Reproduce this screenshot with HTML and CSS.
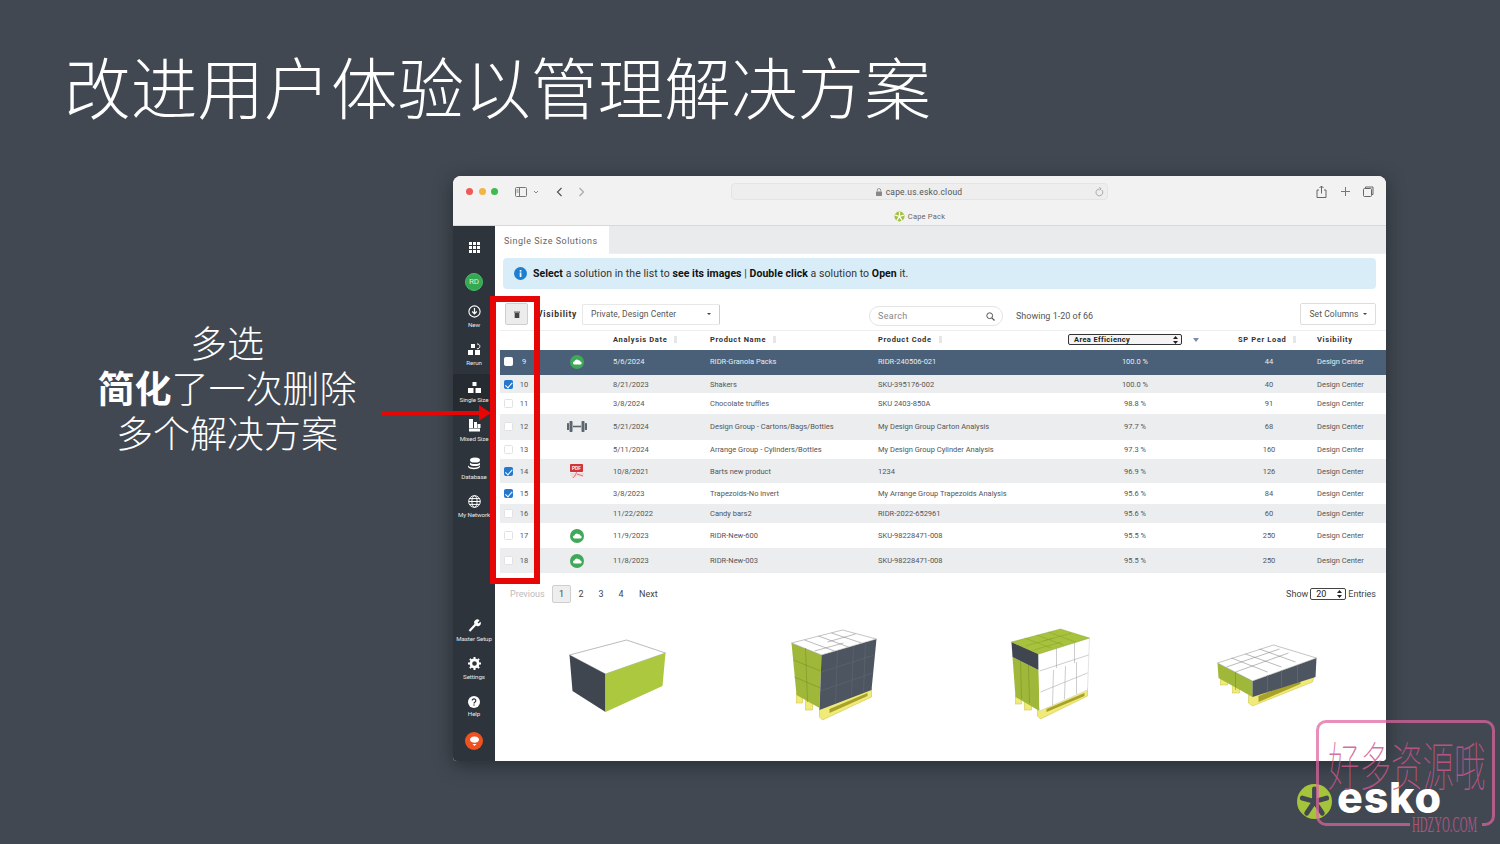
FILE: index.html
```html
<!DOCTYPE html>
<html lang="zh">
<head>
<meta charset="utf-8">
<title>改进用户体验以管理解决方案</title>
<link rel="stylesheet" href="styles.css">
</head>
<body>
<div class="slide">
  <h1 class="title">改进用户体验以管理解决方案</h1>
  <div class="stage">
    <div class="callout">
      <p>多选</p>
      <p><b>简化</b>了一次删除</p>
      <p>多个解决方案</p>
    </div>
    <div class="window">
      <div class="chrome">
        <div class="chrome-top">
          <span class="light red"></span><span class="light amber"></span><span class="light green"></span>
          <svg class="c-sidebar" width="12" height="10" viewBox="0 0 12 10"><rect x=".5" y=".5" width="11" height="9" rx="1" fill="none" stroke="#777"/><path d="M4.5 1v8M1.5 3h2M1.5 5h2" stroke="#777" fill="none"/></svg>
          <svg class="c-chev" width="6" height="4" viewBox="0 0 6 4"><path d="M1 1l2 2 2-2" fill="none" stroke="#888"/></svg>
          <svg class="c-back" width="7" height="10" viewBox="0 0 7 10"><path d="M5.5 1L1.5 5l4 4" fill="none" stroke="#555" stroke-width="1.2"/></svg>
          <svg class="c-fwd" width="7" height="10" viewBox="0 0 7 10"><path d="M1.5 1l4 4-4 4" fill="none" stroke="#aaa" stroke-width="1.2"/></svg>
          <div class="url">
            <svg width="6" height="8" viewBox="0 0 6 8"><path d="M1.3 3.5V2.2a1.7 1.7 0 0 1 3.4 0v1.3" fill="none" stroke="#888" stroke-width=".8"/><rect y="3.5" width="6" height="4.5" rx=".7" fill="#888"/></svg>
            <span>cape.us.esko.cloud</span>
            <svg class="reload" width="9" height="10" viewBox="0 0 9 10"><path d="M6.8 3a3.4 3.4 0 1 1-2.3-1M4.5 0l1.6 2-1.6 1.3" fill="none" stroke="#999" stroke-width=".8"/></svg>
          </div>
          <div class="c-actions">
            <svg width="11" height="13" viewBox="0 0 11 13"><path d="M3 5H1v7.5h9V5H8M5.5 8.5V1M3.5 3l2-2 2 2" fill="none" stroke="#666" stroke-width="1"/></svg>
            <svg width="9" height="9" viewBox="0 0 9 9"><path d="M4.5 0v9M0 4.5h9" stroke="#777" stroke-width="1"/></svg>
            <svg width="11" height="11" viewBox="0 0 11 11"><path d="M2.5 2.5V1h7.5v7.5H8.5" fill="none" stroke="#666"/><rect x=".5" y="2.5" width="8" height="8" rx="1" fill="none" stroke="#666"/></svg>
          </div>
        </div>
        <div class="chrome-tab">
          <svg width="11" height="11" viewBox="0 0 11 11"><circle cx="5.5" cy="5.5" r="5" fill="#a2c13a"/><path d="M5.5 1v4.5M1.2 4.2l4.3 1.3M2.8 9.6l2.7-4.1M8.2 9.6L5.5 5.5M9.8 4.2L5.5 5.5" stroke="#fff" stroke-width="1.3"/></svg>
          <span>Cape Pack</span>
        </div>
      </div>
      <div class="app">
        <nav class="side">
          <svg class="side-grid" width="11" height="11" viewBox="0 0 11 11" fill="#fff"><rect width="3" height="3"/><rect x="4" width="3" height="3"/><rect x="8" width="3" height="3"/><rect y="4" width="3" height="3"/><rect x="4" y="4" width="3" height="3"/><rect x="8" y="4" width="3" height="3"/><rect y="8" width="3" height="3"/><rect x="4" y="8" width="3" height="3"/><rect x="8" y="8" width="3" height="3"/></svg>
          <div class="avatar">RD</div>
          <a class="nav first"><svg width="13" height="13" viewBox="0 0 13 13"><circle cx="6.5" cy="6.5" r="5.6" fill="none" stroke="#fff" stroke-width="1.1"/><path d="M6.5 3v5.5M4.2 6.5l2.3 2.4 2.3-2.4" fill="none" stroke="#fff" stroke-width="1.2"/></svg><span>New</span></a>
          <a class="nav"><svg width="14" height="13" viewBox="0 0 14 13" fill="#fff"><rect x="1" y="7" width="5" height="5"/><rect x="8" y="7" width="5" height="5"/><rect x="4" y="1" width="4" height="4"/><path d="M10 1a2.4 2.4 0 1 1-.1 4.7" fill="none" stroke="#fff"/></svg><span>Rerun</span></a>
          <a class="nav active"><svg width="13" height="11" viewBox="0 0 13 11" fill="#fff"><rect x="4.5" width="4" height="4"/><rect y="6" width="5.5" height="5"/><rect x="7.5" y="6" width="5.5" height="5"/></svg><span>Single Size</span></a>
          <a class="nav"><svg width="13" height="13" viewBox="0 0 13 13" fill="#fff"><rect x="1" width="4" height="9"/><rect x="6" y="3" width="3" height="6"/><rect x="1" y="9.5" width="11" height="3"/><rect x="9.5" y="5" width="3" height="4"/></svg><span>Mixed Size</span></a>
          <a class="nav"><svg width="14" height="13" viewBox="0 0 14 13" fill="#fff"><ellipse cx="8" cy="3" rx="5" ry="2.6"/><path d="M3 5.5c1 2 9 2 10 0v2c-1 2-9 2-10 0z"/><path d="M1 8.5c2 3 10 3 12 0v1.5c-2 3-10 3-12 0z"/></svg><span>Database</span></a>
          <a class="nav"><svg width="13" height="13" viewBox="0 0 13 13" fill="none" stroke="#fff"><circle cx="6.5" cy="6.5" r="5.8"/><ellipse cx="6.5" cy="6.5" rx="2.6" ry="5.8"/><path d="M.7 6.5h11.6M1.5 3.6h10M1.5 9.4h10"/></svg><span>My Network</span></a>
          <a class="nav push"><svg width="13" height="13" viewBox="0 0 13 13"><path d="M1.5 12L7.5 5.5" stroke="#fff" stroke-width="2.2"/><path d="M7 5.5a3 3 0 0 1 4.5-4L9.6 3.4l1 1 1.8-1.7A3 3 0 0 1 8.6 7z" fill="#fff"/></svg><span>Master Setup</span></a>
          <a class="nav"><svg width="13" height="13" viewBox="0 0 13 13"><circle cx="6.5" cy="6.5" r="3.6" fill="none" stroke="#fff" stroke-width="2.6"/><path d="M6.5 0v13M0 6.5h13M1.9 1.9l9.2 9.2M11.1 1.9l-9.2 9.2" stroke="#fff" stroke-width="2" stroke-dasharray="2.4 8.2 2.4"/></svg><span>Settings</span></a>
          <a class="nav"><svg width="12" height="12" viewBox="0 0 12 12"><circle cx="6" cy="6" r="6" fill="#fff"/><path d="M4.2 4.6a1.8 1.8 0 1 1 2.6 1.6C6.2 6.6 6 7 6 7.6" fill="none" stroke="#2d343b" stroke-width="1.2"/><rect x="5.4" y="8.4" width="1.2" height="1.2" fill="#2d343b"/></svg><span>Help</span></a>
          <div class="pin"><svg width="11" height="11" viewBox="0 0 11 11"><path d="M1 4a4.5 3.6 0 0 1 9 0c0 1.600-2.500 2.800-4.500 2.800S1 5.600 1 4z" fill="#fff"/><path d="M3.500 8h4L5.500 10z" fill="#fff"/></svg></div>
        </nav>
        <main class="main">
          <div class="tabs"><div class="tab">Single Size Solutions</div></div>
          <div class="banner">
            <svg width="13" height="13" viewBox="0 0 13 13"><circle cx="6.500" cy="6.500" r="6.500" fill="#1c7fd0"/><rect x="5.700" y="5.500" width="1.700" height="4.500" fill="#fff"/><rect x="5.700" y="3" width="1.700" height="1.600" fill="#fff"/></svg>
            <span><b>Select</b> a solution in the list to <b>see its images</b> | <b>Double click</b> a solution to <b>Open</b> it.</span>
          </div>
          <div class="tools">
            <button class="trash"><svg width="6" height="7" viewBox="0 0 6 7" fill="#444"><rect y=".6" width="6" height="1"/><rect x=".7" y="2" width="4.600" height="5"/></svg></button>
            <b class="vis">Visibility</b>
            <div class="vis-select"><span>Private, Design Center</span><i class="caret"></i></div>
            <div class="search"><span>Search</span><svg width="9" height="9" viewBox="0 0 9 9"><circle cx="3.700" cy="3.700" r="2.900" fill="none" stroke="#555"/><path d="M5.800 5.800L8.500 8.500" stroke="#555" stroke-width="1.200"/></svg></div>
            <span class="showing">Showing 1-20 of 66</span>
            <button class="columns">Set Columns<i class="caret"></i></button>
          </div>
          <div class="table">
            <div class="row head">
              <span></span><span></span><span></span>
              <b>Analysis Date<i class="sort"></i></b>
              <b>Product Name<i class="sort"></i></b>
              <b>Product Code<i class="sort"></i></b>
              <div class="eff-head"><div class="eff-select"><b>Area Efficiency</b><svg width="5" height="8" viewBox="0 0 5 8" fill="#222"><path d="M2.500 0L5 3H0zM2.500 8L0 5h5z"/></svg></div><i class="down"></i></div>
              <b class="sp-head">SP Per Load<i class="sort"></i></b>
              <b>Visibility</b>
            </div>
            <div class="row selected h25"><i class="cb"></i><span class="n">9</span><span class="ic"><svg class="cloud" width="14" height="14" viewBox="0 0 14 14"><circle cx="7" cy="7" r="7" fill="#3fa859"/><path d="M4 9.500h6a1.500 1.500 0 0 0 .3-3A1.700 1.700 0 0 0 8.400 5.300 2.300 2.300 0 0 0 4.500 6.400 1.600 1.600 0 0 0 4 9.500z" fill="#fff"/></svg></span><span>5/6/2024</span><span>RIDR-Granola Packs</span><span>RIDR-240506-021</span><span class="c">100.0 %</span><span class="m">44</span><span>Design Center</span></div>
            <div class="row alt h18"><i class="cb on"></i><span class="n">10</span><span class="ic"></span><span>8/21/2023</span><span>Shakers</span><span>SKU-395176-002</span><span class="c">100.0 %</span><span class="m">40</span><span>Design Center</span></div>
            <div class="row h21"><i class="cb"></i><span class="n">11</span><span class="ic"></span><span>3/8/2024</span><span>Chocolate truffles</span><span>SKU 2403-850A</span><span class="c">98.8 %</span><span class="m">91</span><span>Design Center</span></div>
            <div class="row alt h26"><i class="cb"></i><span class="n">12</span><span class="ic"><svg width="20" height="11" viewBox="0 0 20 11" fill="#5c6670"><rect y="2" width="2" height="7" rx=".6"/><rect x="2.500" width="3" height="11" rx=".8"/><rect x="6" y="4.700" width="8" height="1.600"/><rect x="14.500" width="3" height="11" rx=".8"/><rect x="18" y="2" width="2" height="7" rx=".6"/></svg></span><span>5/21/2024</span><span>Design Group - Cartons/Bags/Bottles</span><span>My Design Group Carton Analysis</span><span class="c">97.7 %</span><span class="m">68</span><span>Design Center</span></div>
            <div class="row h19"><i class="cb"></i><span class="n">13</span><span class="ic"></span><span>5/11/2024</span><span>Arrange Group - Cylinders/Bottles</span><span>My Design Group Cylinder Analysis</span><span class="c">97.3 %</span><span class="m">160</span><span>Design Center</span></div>
            <div class="row alt h24"><i class="cb on"></i><span class="n">14</span><span class="ic"><svg width="16" height="15" viewBox="0 0 16 15"><path d="M1 9l14 0-1 4-5-1-6 2z" fill="#f4d8d8"/><path d="M4 14c2-2 4-5 4-9M8 10l6 2" stroke="#d8494f" stroke-width=".7" fill="none"/><rect x="1" width="13" height="8" rx=".8" fill="#d5333a"/><text x="7.500" y="6" class="pdf">PDF</text></svg></span><span>10/8/2021</span><span>Barts new product</span><span>1234</span><span class="c">96.9 %</span><span class="m">126</span><span>Design Center</span></div>
            <div class="row h21"><i class="cb on"></i><span class="n">15</span><span class="ic"></span><span>3/8/2023</span><span>Trapezoids-No invert</span><span>My Arrange Group Trapezoids Analysis</span><span class="c">95.6 %</span><span class="m">84</span><span>Design Center</span></div>
            <div class="row alt h19"><i class="cb"></i><span class="n">16</span><span class="ic"></span><span>11/22/2022</span><span>Candy bars2</span><span>RIDR-2022-652961</span><span class="c">95.6 %</span><span class="m">60</span><span>Design Center</span></div>
            <div class="row h25"><i class="cb"></i><span class="n">17</span><span class="ic"><svg class="cloud" width="14" height="14" viewBox="0 0 14 14"><circle cx="7" cy="7" r="7" fill="#3fa859"/><path d="M4 9.500h6a1.500 1.500 0 0 0 .3-3A1.700 1.700 0 0 0 8.400 5.300 2.300 2.300 0 0 0 4.500 6.400 1.600 1.600 0 0 0 4 9.500z" fill="#fff"/></svg></span><span>11/9/2023</span><span>RIDR-New-600</span><span>SKU-98228471-008</span><span class="c">95.5 %</span><span class="m">250</span><span>Design Center</span></div>
            <div class="row alt h25"><i class="cb"></i><span class="n">18</span><span class="ic"><svg class="cloud" width="14" height="14" viewBox="0 0 14 14"><circle cx="7" cy="7" r="7" fill="#3fa859"/><path d="M4 9.500h6a1.500 1.500 0 0 0 .3-3A1.700 1.700 0 0 0 8.400 5.300 2.300 2.300 0 0 0 4.500 6.400 1.600 1.600 0 0 0 4 9.500z" fill="#fff"/></svg></span><span>11/8/2023</span><span>RIDR-New-003</span><span>SKU-98228471-008</span><span class="c">95.5 %</span><span class="m">250</span><span>Design Center</span></div>
          </div>
          <div class="pager">
            <span class="prev">Previous</span><span class="page cur">1</span><span class="page">2</span><span class="page">3</span><span class="page">4</span><span class="next">Next</span>
            <div class="entries"><span>Show</span><div class="entries-select"><span>20</span><svg width="5" height="8" viewBox="0 0 5 8" fill="#222"><path d="M2.500 0L5 3H0zM2.500 8L0 5h5z"/></svg></div><span>Entries</span></div>
          </div>
          <div class="gallery">
            <svg viewBox="508.500 625 217 100" width="217" height="100">
              <polygon points="570,655 627,640 666,653 606,674" fill="#fff" stroke="#777" stroke-width=".5"/>
              <polygon points="570,655 606,674 606,712 573,691" fill="#3f4650"/>
              <polygon points="606,674 666,653 663,686 606,712" fill="#abc83f"/>
            </svg>
            <svg viewBox="725.500 625 217 100" width="217" height="100">
              <g class="wood">
                <rect x="797" y="693" width="6" height="10"/><rect x="806" y="698" width="7" height="12"/>
                <polygon points="820,708 872,688 872,697 823,720 820,717"/>
              </g>
              <polygon class="recess" points="830,709 868,693 868,696 830,713"/>
              <polygon points="792,643 822,655 820,708 797,695" fill="#a0b83a"/>
              <polygon points="822,655 877,639 872,690 820,710" fill="#4c5560"/>
              <polygon points="792,643 843,630 877,639 822,655" fill="#fff" stroke="#8a8a8a" stroke-width=".5"/>
              <path d="M805 640l30 11M819 636l30 11M832 633l30 10M815 651l29-8M828 642l28-8" fill="none" stroke="#777" stroke-width=".5"/>
              <path d="M794 660l27 11M795 677l26 11M806 648l2 54" stroke="#7b9028" stroke-width=".6" fill="none"/>
              <path d="M838 651l-2 52M854 646l-2 50M866 642l-2 50M822 672l53-17M821 691l52-18" stroke="#5f6872" stroke-width=".6" fill="none"/>
            </svg>
            <svg viewBox="941.500 625 217 100" width="217" height="100">
              <g class="wood">
                <rect x="1015" y="695" width="6" height="9"/><rect x="1024" y="700" width="7" height="10"/>
                <polygon points="1037,709 1087,688 1087,696 1040,719 1037,716"/>
              </g>
              <polygon class="recess" points="1046,709 1084,693 1084,696 1046,712"/>
              <polygon points="1012,657 1038,670 1039,711 1015,697" fill="#a0b83a"/>
              <polygon points="1011,642 1038,654 1038,670 1012,657" fill="#3f4650"/>
              <polygon points="1038,654 1089,638 1087,690 1039,711" fill="#fff"/>
              <path d="M1038,654L1089,638L1087,690L1039,711" fill="none" stroke="#c8c8c8" stroke-width=".5"/>
              <polygon points="1011,642 1060,629 1089,638 1038,654" fill="#a7c23c" stroke="#86a02c" stroke-width=".4"/>
              <path d="M1024 638l27 10M1036 635l27 10M1048 632l27 10M1025 646l28-8M1033 650l28-8M1043 641l28-8" fill="none" stroke="#86a02c" stroke-width=".5"/>
              <path d="M1056 648v20M1074 643v20M1053 670l-1 35M1065 666l-1 33M1076 662v32M1039 671l49-16M1040 692l47-19" fill="none" stroke="#9a9a9a" stroke-width=".5"/>
              <path d="M1020 661l1 38M1028 665l1 38" stroke="#7b9028" stroke-width=".6" fill="none"/>
            </svg>
            <svg viewBox="1158.500 625 217 100" width="217" height="100">
              <g class="wood">
                <rect x="1220" y="678" width="7" height="7"/><rect x="1232" y="684" width="7" height="9"/>
                <polygon points="1248,695 1314,675 1312,682 1252,706 1248,703"/>
              </g>
              <polygon class="recess" points="1258,696 1300,680 1300,684 1258,702"/>
              <polygon points="1217,663 1252,681 1252,697 1218,678" fill="#a0b83a"/>
              <polygon points="1252,681 1316,658 1315,677 1252,697" fill="#4c5560"/>
              <polygon points="1217,663 1273,645 1316,658 1252,681" fill="#fff" stroke="#888" stroke-width=".5"/>
              <path d="M1231 658l36 14M1245 654l36 13M1259 649l36 13M1235 672l53-19M1226 667l53-18M1267 675v18M1281 670v17M1297 665v17M1235 672v18" fill="none" stroke="#777" stroke-width=".5"/>
            </svg>
          </div>
        </main>
      </div>
    </div>
  </div>

  <div class="redframe"></div>
  <div class="arrow"></div>

  <div class="esko">
    <svg width="35" height="35" viewBox="0 0 36 36"><circle cx="18" cy="18" r="18" fill="#a3c43b"/><path d="M18 5v13M5.500 14.500L18 18M10 30l8-12M26 30l-8-12M30.500 14.500L18 18" stroke="#414851" stroke-width="5" stroke-linecap="round"/></svg>
    <span>esko</span>
  </div>
  <div class="mark">
    <div class="mark-cn">好多资源哦</div>
    <div class="mark-en"><span>HDZYO.COM</span></div>
  </div>
</div>
</body>
</html>
```

FILE: styles.css
```css
* { box-sizing: border-box; }
html, body { margin: 0; padding: 0; }
body { width: 1500px; height: 844px; overflow: hidden; background: #414851; font-family: Roboto, "Noto Sans CJK SC", sans-serif; }
.slide { position: relative; width: 1500px; height: 844px; background: #414851; overflow: hidden; }
.title { margin: 0; height: 176px; padding-left: 64px; line-height: 171px; font-family: "Noto Sans CJK SC", sans-serif; font-size: 66.7px; font-weight: 300; color: #fff; white-space: nowrap; }
.stage { display: flex; align-items: flex-start; }
.callout { width: 453px; padding: 144px 0 0 1px; text-align: center; color: #fff; font-family: "Noto Sans CJK SC", sans-serif; font-size: 37px; font-weight: 300; line-height: 45px; }
.callout p { margin: 0; }
.callout b { font-weight: 700; }

.window { width: 933px; height: 585px; border-radius: 8px 8px 4px 4px; overflow: hidden; background: #fff; box-shadow: 0 4px 18px rgba(20, 25, 30, .55); display: flex; flex-direction: column; }
.chrome { height: 50px; background: #f2f2f2; border-bottom: 1px solid #d8d8d8; flex: none; }
.chrome-top { height: 31px; display: flex; align-items: center; padding: 0 12px 0 13px; }
.light { width: 7px; height: 7px; border-radius: 50%; margin-right: 5.500px; }
.red { background: #ee5a55; }
.amber { background: #f2b544; }
.green { background: #3fb950; }
.c-sidebar { margin-left: 11px; }
.c-chev { margin-left: 6px; }
.c-back { margin-left: 17px; }
.c-fwd { margin-left: 15px; }
.url { position: relative; width: 377px; height: 17px; margin-left: 146px; display: flex; align-items: center; justify-content: center; gap: 4px; background: #eeeeee; border: 1px solid #e4e4e4; border-radius: 4px; font-size: 8.500px; letter-spacing: .2px; color: #555; }
.reload { position: absolute; right: 3px; top: 3px; }
.c-actions { margin-left: auto; width: 58px; display: flex; align-items: center; justify-content: space-between; }
.chrome-tab { height: 18px; display: flex; align-items: center; justify-content: center; gap: 3px; font-size: 7.500px; letter-spacing: .2px; color: #666; }

.app { flex: 1; display: flex; min-height: 0; }
.side { width: 42px; flex: none; background: #2d343b; display: flex; flex-direction: column; align-items: center; color: #fff; }
.side-grid { margin-top: 16px; flex: none; }
.avatar { width: 18px; height: 18px; margin-top: 20px; flex: none; border-radius: 50%; background: #34a853; border: 1px solid #4cbb66; font-size: 8px; line-height: 16px; text-align: center; color: #d7efd9; }
.nav { width: 100%; height: 38px; flex: none; display: flex; flex-direction: column; align-items: center; justify-content: center; gap: 2.500px; font-size: 6.200px; letter-spacing: -.1px; color: #e6e8ea; white-space: nowrap; }
.nav.first { margin-top: 7px; }
.nav.push { margin-top: auto; }
.nav.active { background: #252b31; }
.pin { width: 18px; height: 18px; margin: 6px 0 11px; flex: none; border-radius: 50%; background: #f0521f; display: flex; align-items: center; justify-content: center; }

.main { flex: 1; min-width: 0; display: flex; flex-direction: column; background: #fff; }
.tabs { height: 28px; flex: none; background: #e9ebed; border-bottom: 1px solid #eef0f1; }
.tab { width: 114px; height: 28px; padding-left: 9px; background: #fff; font-size: 9px; line-height: 30px; letter-spacing: .5px; color: #666; }
.banner { height: 31px; margin: 4px 10px 0 8px; padding-left: 11px; flex: none; display: flex; align-items: center; gap: 6px; background: #d9edf8; border-radius: 4px; font-size: 10.500px; letter-spacing: .06px; color: #333; }
.banner b { color: #111; font-weight: 700; }
.tools { height: 22px; margin-top: 14px; padding: 0 10px; flex: none; display: flex; align-items: center; font-size: 9px; color: #555; }
.trash { width: 23px; height: 22px; padding: 0; display: flex; align-items: center; justify-content: center; background: #ececec; border: 1px solid #cfcfcf; border-radius: 2px; }
.vis { margin-left: 9px; width: 40px; font-size: 8.500px; letter-spacing: .7px; color: #333; white-space: nowrap; }
.vis-select { width: 138px; height: 21px; margin-left: 5px; padding: 0 8px; display: flex; align-items: center; justify-content: space-between; border: 1px solid #e8e8e8; border-right-color: #ccc; border-radius: 2px; font-size: 8.500px; letter-spacing: .1px; color: #555; }
.caret { display: inline-block; width: 0; height: 0; border: 2px solid transparent; border-top: 2.500px solid #444; border-bottom: 0; }
.search { width: 134px; height: 20px; margin: 4px 0 0 149px; padding: 0 7px 0 8px; display: flex; align-items: center; justify-content: space-between; border: 1px solid #e4e4e4; border-radius: 10px; color: #888; font-size: 9px; letter-spacing: .3px; }
.showing { margin: 4px 0 0 13px; font-size: 9px; color: #555; }
.columns { width: 76px; height: 22px; margin-left: auto; display: flex; align-items: center; justify-content: center; gap: 4px; padding: 0; background: #fff; border: 1px solid #ddd; border-radius: 2px; font: 8.500px Roboto, sans-serif; letter-spacing: .1px; color: #555; }

.table { margin: 5px 0 0 5px; flex: none; font-size: 7.500px; color: #555; }
.row { display: grid; grid-template-columns: 12px 16px 81px 97px 168px 182px 161px 96px 69px; align-items: center; padding-left: 4px; white-space: nowrap; }
.head { height: 20px; padding-bottom: 2px; border-top: 1px solid #eee; font-size: 7.500px; letter-spacing: .65px; color: #333; }
.head b { font-weight: 700; }
.sort { display: inline-block; width: 3px; height: 7px; margin-left: 7px; vertical-align: -1px; background: #e4e6e8; }
.eff-head { display: flex; align-items: center; padding-left: 8px; }
.eff-select { width: 114px; height: 11px; padding: 0 3px 0 5px; display: flex; align-items: center; justify-content: space-between; border: 1px solid #333; border-radius: 2px; background: #f4f4f4; font-size: 7.500px; letter-spacing: .35px; color: #222; }
.down { margin-left: 11px; width: 0; height: 0; border: 3px solid transparent; border-top: 4px solid #7a8aa8; border-bottom: 0; }
.sp-head { padding-left: 17px; }
.alt { background: #ebedef; }
.selected { padding-bottom: 2px; background: #4a6078; color: #e8edf2; }
.h18 { height: 18px; } .h19 { height: 19px; } .h21 { height: 21px; } .h24 { height: 24px; } .h25 { height: 25px; } .h26 { height: 26px; padding-bottom: 2px; }
.cb { position: relative; display: block; width: 9px; height: 9px; background: #fff; border: 1px solid #e2e2e2; border-radius: 1.500px; }
.cb.on { background: #2479cf; border-color: #2479cf; }
.cb.on::after { content: ""; position: absolute; left: 2px; top: 0; width: 3px; height: 5.500px; border: solid #fff; border-width: 0 1.300px 1.300px 0; transform: rotate(42deg); }
.selected .cb { border-color: #fff; }
.n { text-align: center; }
.ic { display: flex; justify-content: center; padding-left: 9px; }
.c { text-align: center; padding-right: 11px; }
.m { text-align: center; }
.pdf { font: 700 4.500px "Liberation Sans", sans-serif; fill: #fff; text-anchor: middle; }

.pager { position: relative; height: 18px; margin-top: 12px; padding-left: 15px; flex: none; display: flex; align-items: center; font-size: 9px; color: #444; }
.prev { width: 42px; color: #bbb; }
.page { width: 20px; text-align: center; }
.cur { width: 19px; height: 18px; line-height: 16px; background: #eee; border: 1px solid #cfcfcf; border-radius: 2px; }
.next { margin-left: 8px; }
.entries { margin-left: auto; margin-right: 10px; display: flex; align-items: center; gap: 2px; font-size: 9px; }
.entries-select { width: 36px; height: 12px; padding: 0 3px 0 5px; display: flex; align-items: center; justify-content: space-between; border: 1px solid #444; border-radius: 2px; font-size: 9px; color: #222; }
.gallery { margin-top: 22px; padding-left: 12.500px; display: grid; grid-template-columns: repeat(4, 217px); flex: none; }
.gallery svg { display: block; }
.wood { fill: #f0ea78; stroke: #c9bf3c; stroke-width: .5; }
.recess { fill: #a8a22a; }

.redframe { position: absolute; left: 490px; top: 296px; width: 50px; height: 288px; border: 6px solid #e60606; pointer-events: none; }
.arrow { position: absolute; left: 381px; top: 411px; width: 98px; height: 4px; background: #e60606; }
.arrow::after { content: ""; position: absolute; left: 98px; top: -6px; border-left: 12px solid #e60606; border-top: 8px solid transparent; border-bottom: 8px solid transparent; }

.esko { position: absolute; left: 1297px; top: 772px; display: flex; align-items: flex-start; gap: 5px; color: #fff; font-family: Inter, sans-serif; font-size: 43px; font-weight: 800; line-height: 50px; letter-spacing: .8px; }
.esko svg { margin-top: 12px; }
.mark { position: absolute; left: 1316px; top: 720px; width: 179px; height: 106px; border: 3px solid rgba(222, 100, 160, .72); border-radius: 10px; }
.mark-cn { margin: 24px 0 0 9px; font-family: "Noto Sans CJK SC", sans-serif; font-weight: 100; font-size: 31.500px; line-height: 32px; color: rgba(205, 85, 140, .85); white-space: nowrap; transform: scaleY(1.65); }
.mark-en { position: absolute; left: 91px; top: 92px; width: 72px; height: 20px; background: #414851; line-height: 20px; white-space: nowrap; }
.mark-en span { display: inline-block; margin-left: 2px; font-family: "Liberation Serif", serif; font-size: 23px; color: #a8557c; transform: scaleX(.47); transform-origin: 0 50%; }
```
